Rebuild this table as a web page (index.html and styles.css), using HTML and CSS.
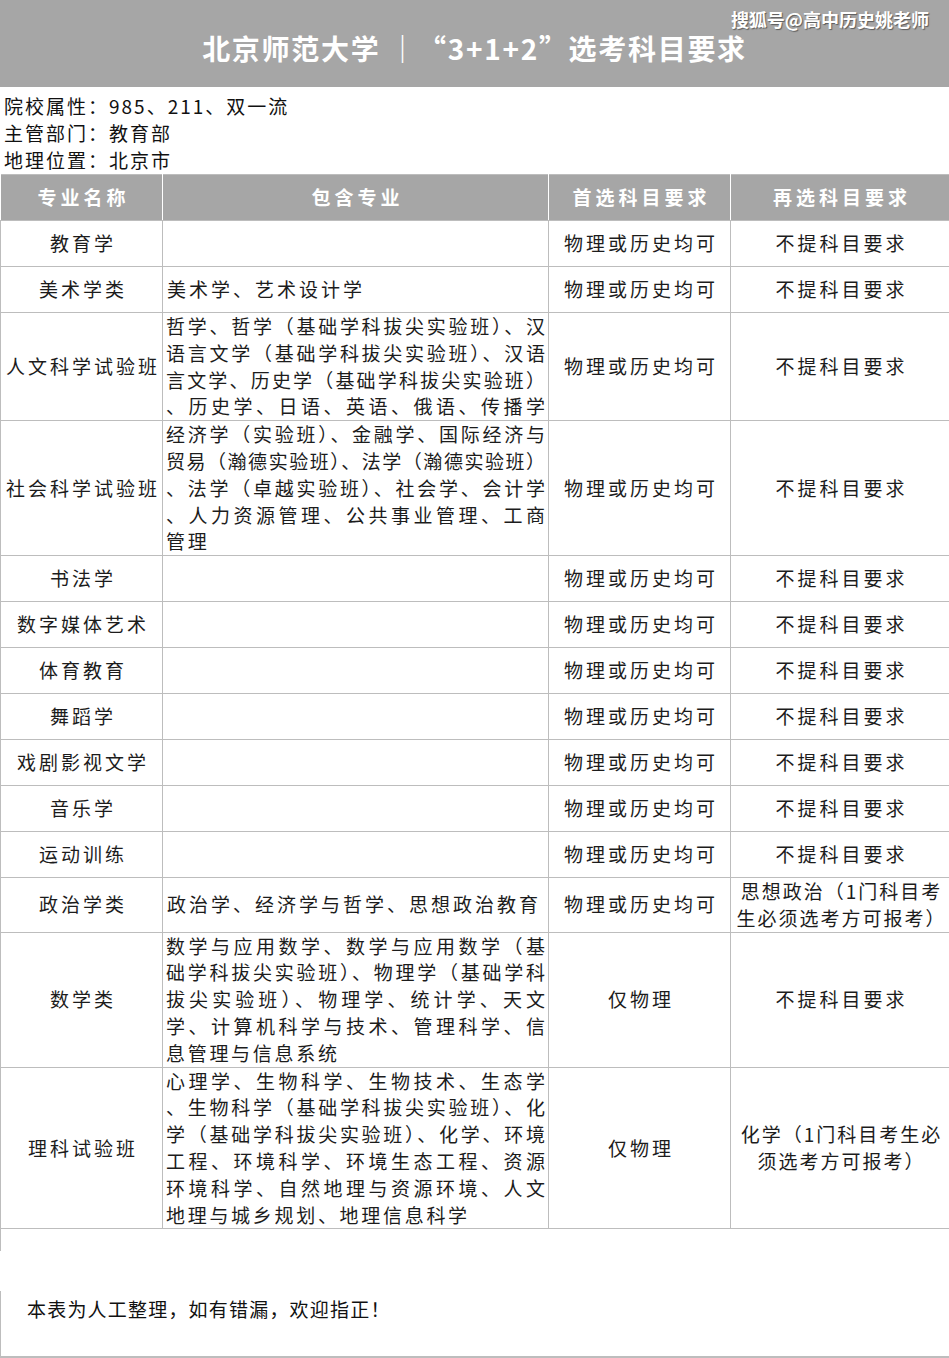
FILE: index.html
```html
<!DOCTYPE html>
<html lang="zh-CN">
<head>
<meta charset="utf-8">
<title>北京师范大学 “3+1+2”选考科目要求</title>
<link rel="stylesheet" href="styles.css">
</head>
<body>
<div class="page">
  <header class="banner">
    <h1 class="title">北京师范大学 ｜“3+1+2”选考科目要求</h1>
    <span class="watermark">搜狐号@高中历史姚老师</span>
  </header>

  <div class="info">
    <div>院校属性：985、211、双一流</div>
    <div>主管部门：教育部</div>
    <div>地理位置：北京市</div>
  </div>

  <table class="req">
    <colgroup>
      <col class="c1"><col class="c2"><col class="c3"><col class="c4">
    </colgroup>
    <thead>
      <tr><th>专业名称</th><th>包含专业</th><th>首选科目要求</th><th>再选科目要求</th></tr>
    </thead>
    <tbody>
      <tr><td class="name">教育学</td><td class="sub"></td><td class="first">物理或历史均可</td><td class="second">不提科目要求</td></tr>
      <tr><td class="name">美术学类</td><td class="sub">美术学、艺术设计学</td><td class="first">物理或历史均可</td><td class="second">不提科目要求</td></tr>
      <tr>
        <td class="name">人文科学试验班</td>
        <td class="sub multi">
          <div class="ln">哲学、哲学（基础学科拔尖实验班）、汉</div>
          <div class="ln">语言文学（基础学科拔尖实验班）、汉语</div>
          <div class="ln">言文学、历史学（基础学科拔尖实验班）</div>
          <div class="ln">、历史学、日语、英语、俄语、传播学</div>
        </td>
        <td class="first">物理或历史均可</td><td class="second">不提科目要求</td>
      </tr>
      <tr>
        <td class="name">社会科学试验班</td>
        <td class="sub multi">
          <div class="ln">经济学（实验班）、金融学、国际经济与</div>
          <div class="ln">贸易（瀚德实验班）、法学（瀚德实验班）</div>
          <div class="ln">、法学（卓越实验班）、社会学、会计学</div>
          <div class="ln">、人力资源管理、公共事业管理、工商</div>
          <div class="ln end">管理</div>
        </td>
        <td class="first">物理或历史均可</td><td class="second">不提科目要求</td>
      </tr>
      <tr><td class="name">书法学</td><td class="sub"></td><td class="first">物理或历史均可</td><td class="second">不提科目要求</td></tr>
      <tr><td class="name">数字媒体艺术</td><td class="sub"></td><td class="first">物理或历史均可</td><td class="second">不提科目要求</td></tr>
      <tr><td class="name">体育教育</td><td class="sub"></td><td class="first">物理或历史均可</td><td class="second">不提科目要求</td></tr>
      <tr><td class="name">舞蹈学</td><td class="sub"></td><td class="first">物理或历史均可</td><td class="second">不提科目要求</td></tr>
      <tr><td class="name">戏剧影视文学</td><td class="sub"></td><td class="first">物理或历史均可</td><td class="second">不提科目要求</td></tr>
      <tr><td class="name">音乐学</td><td class="sub"></td><td class="first">物理或历史均可</td><td class="second">不提科目要求</td></tr>
      <tr><td class="name">运动训练</td><td class="sub"></td><td class="first">物理或历史均可</td><td class="second">不提科目要求</td></tr>
      <tr>
        <td class="name">政治学类</td>
        <td class="sub">政治学、经济学与哲学、思想政治教育</td>
        <td class="first">物理或历史均可</td>
        <td class="second multi2">
          <div>思想政治（1门科目考</div>
          <div>生必须选考方可报考）</div>
        </td>
      </tr>
      <tr>
        <td class="name">数学类</td>
        <td class="sub multi">
          <div class="ln">数学与应用数学、数学与应用数学（基</div>
          <div class="ln">础学科拔尖实验班）、物理学（基础学科</div>
          <div class="ln">拔尖实验班）、物理学、统计学、天文</div>
          <div class="ln">学、计算机科学与技术、管理科学、信</div>
          <div class="ln end">息管理与信息系统</div>
        </td>
        <td class="first">仅物理</td><td class="second">不提科目要求</td>
      </tr>
      <tr>
        <td class="name">理科试验班</td>
        <td class="sub multi">
          <div class="ln">心理学、生物科学、生物技术、生态学</div>
          <div class="ln">、生物科学（基础学科拔尖实验班）、化</div>
          <div class="ln">学（基础学科拔尖实验班）、化学、环境</div>
          <div class="ln">工程、环境科学、环境生态工程、资源</div>
          <div class="ln">环境科学、自然地理与资源环境、人文</div>
          <div class="ln end">地理与城乡规划、地理信息科学</div>
        </td>
        <td class="first">仅物理</td>
        <td class="second multi2">
          <div>化学（1门科目考生必</div>
          <div>须选考方可报考）</div>
        </td>
      </tr>
    </tbody>
  </table>

  <footer class="note">
    <p>本表为人工整理，如有错漏，欢迎指正！</p>
  </footer>
</div>
</body>
</html>
```

FILE: styles.css
```css
* { box-sizing: border-box; }

body {
  margin: 0;
  background: #ffffff;
  color: #1c1c1c;
  font-family: "Noto Sans CJK SC", "Noto Sans", sans-serif;
}

.page {
  width: 949px;
}

.banner {
  position: relative;
  height: 87px;
  background: #a6a6a6;
  display: flex;
  align-items: center;
  justify-content: center;
  padding-top: 8px;
}

.title {
  margin: 0;
  color: #ffffff;
  font-size: 28px;
  font-weight: 700;
  letter-spacing: 1.7px;
  line-height: 34px;
}

.watermark {
  position: absolute;
  top: 7px;
  right: 20px;
  color: #ffffff;
  font-size: 18px;
  font-weight: 700;
  line-height: 24px;
  text-shadow: 1px 1px 1px rgba(0, 0, 0, 0.45);
}

.info {
  padding: 5px 0 1px 4px;
  font-size: 19px;
  line-height: 27px;
  letter-spacing: 2px;
  color: #111;
}

.req {
  width: 949px;
  table-layout: fixed;
  border-collapse: collapse;
  border: 1px solid #bdbdbd;
  font-size: 19px;
  line-height: 26.8px;
}

.c1 { width: 162px; }
.c2 { width: 386px; }
.c3 { width: 182px; }
.c4 { width: 219px; }

.req th {
  background: #a6a6a6;
  color: #ffffff;
  font-weight: 700;
  letter-spacing: 4px;
  padding: 9.1px 0 9.1px 4px;
  border-left: 1px solid #ffffff;
  border-right: 1px solid #ffffff;
  border-bottom: 1px solid #bdbdbd;
  text-align: center;
  white-space: nowrap;
}

.req td {
  border: 1px solid #bdbdbd;
  padding: 9.1px 0;
  vertical-align: middle;
}

.name, .first, .second {
  text-align: center;
  letter-spacing: 3px;
  padding-left: 3px !important;
  white-space: nowrap;
}

.sub {
  text-align: left;
  letter-spacing: 3px;
  padding-left: 4px !important;
  white-space: nowrap;
}

.sub.multi {
  padding: 0 2px 0 3px !important;
  letter-spacing: 1px;
  white-space: normal;
}

.ln {
  text-align: justify;
  text-align-last: justify;
}

.ln.end {
  text-align-last: left;
  letter-spacing: 2.7px;
}

.second.multi2 {
  padding: 0 0 0 3px !important;
  letter-spacing: 2px;
  line-height: 26.8px;
}

.note {
  height: 129px;
  border-bottom: 2px solid #bdbdbd;
  background: linear-gradient(to bottom, #bdbdbd 0, #bdbdbd 22px, transparent 22px, transparent 62px, #bdbdbd 62px) left top / 1px 100% no-repeat;
  padding: 66px 0 0 27px;
}

.note p {
  margin: 0;
  font-size: 19px;
  line-height: 27px;
  letter-spacing: 1.2px;
  color: #111;
}
```
